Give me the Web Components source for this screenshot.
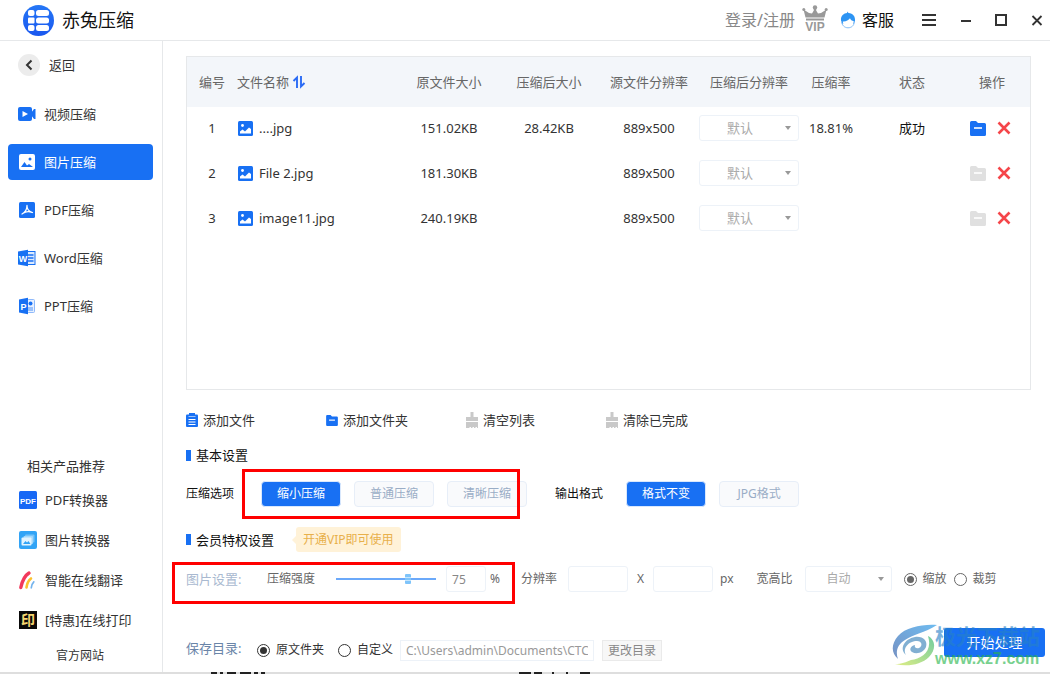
<!DOCTYPE html>
<html lang="zh-CN">
<head>
<meta charset="utf-8">
<meta name="viewport" content="width=device-width, initial-scale=1">
<title>赤兔压缩</title>
<style>
body { margin: 0; background: #fff; color: #333; font: 13px/20px "Noto Sans", "Noto Sans CJK SC", sans-serif; --blue: #1870f3; --line: #e6e8ea; }
</style>
</head>
<body>
<ct-app></ct-app>
<script>
const RESET = `*{box-sizing:border-box}button,input,select{font:inherit;color:inherit;margin:0}a{color:inherit;text-decoration:none}button{border:0;background:none;padding:0;cursor:pointer}`;

function define(name, css, html, setup) {
  const template = document.createElement('template');
  template.innerHTML = `<style>${RESET}${css}</style>${html}`;
  customElements.define(name, class extends HTMLElement {
    constructor() {
      super();
      this.attachShadow({ mode: 'open' }).append(template.content.cloneNode(true));
    }
    connectedCallback() {
      if (setup && !this.ready) { this.ready = true; setup(this, this.shadowRoot); }
    }
  });
}

const ICONS = {
  logo: ['0 0 31 31', `<defs><linearGradient id="g" x2="0" y2="1"><stop stop-color="#2577f6"/><stop offset="1" stop-color="#1a57ef"/></linearGradient></defs><circle cx="15.500" cy="15.500" r="15.500" fill="url(#g)"/><g fill="#fff"><rect x="5" y="5" width="6.500" height="6" rx="2"/><rect x="13" y="5" width="13" height="6" rx="2.500"/><rect x="5" y="12.500" width="6.500" height="6" rx="1"/><rect x="13" y="12.500" width="13" height="6" rx="2.500"/><rect x="5" y="20" width="6.500" height="6" rx="2"/><rect x="13" y="20" width="13" height="6" rx="2.500"/></g>`],
  crown: ['0 0 26 26', `<path d="M3.500 12.500 1.500 4.500 7 8l3 .5 1.800-3L12 2h2l.2 3.500 1.800 3 3-.5 5.500-3.500-2 8zM4 13.500h18v2H4z" fill="#999"/><circle cx="1.800" cy="4.500" r="1.500" fill="#999"/><circle cx="24.200" cy="4.500" r="1.500" fill="#999"/><circle cx="13" cy="2.500" r="2.200" fill="#999"/><text x="13" y="25.500" text-anchor="middle" font-family="Liberation Sans" font-weight="700" font-size="12" fill="#999">VIP</text>`],
  service: ['0 0 16 18', `<path d="M1 9.500C.500 4.500 4 2.200 7 2L7.500.500l1 1.500C13 2.300 15.500 5.500 15 10l-1.500 3h-11z" fill="#2d94f3"/><path d="M2.800 10.500c3 .3 5.700-1 7.200-3.200.5 1.500 1.800 2.700 3.800 3-.3 3.700-2.600 6-5.800 6s-5-2-5.200-5.800z" fill="#fff"/><path d="M1.500 10.500C2 14.500 4.700 16.800 8 16.800s6-2 6.400-6" fill="none" stroke="#83bdf6"/>`],
  menu: ['0 0 16 14', `<path d="M1 2h14M1 7h14M1 12h14" stroke="#333" stroke-width="2"/>`],
  min: ['0 0 10 12', `<path d="M0 7h10" stroke="#333" stroke-width="2"/>`],
  max: ['0 0 12 12', `<path d="M1 1h10v10H1z" fill="none" stroke="#333" stroke-width="2"/>`],
  close: ['0 0 12 12', `<path d="m1.500 2 9 9M10.500 2l-9 9" stroke="#333" stroke-width="1.800"/>`],
  back: ['0 0 22 22', `<circle cx="11" cy="11" r="11" fill="#ececec"/><path d="m13.500 6.500-4.500 4.500 4.500 4.500" fill="none" stroke="#333" stroke-width="2"/>`],
  video: ['0 0 18 18', `<rect y="2" width="14" height="14" rx="2" fill="#1870f3"/><path d="m13 8 3-4h1.500v10H16l-3-4z" fill="#1870f3"/><path d="m4.500 6 5.500 3-5.500 3z" fill="#fff"/>`],
  image: ['0 0 15 15', `<rect width="15" height="15" rx="1.500" fill="#1870f3"/><circle cx="4.500" cy="4.500" r="1.400" fill="#fff"/><path d="M2 12.500V10.500l2.500-2 2.500 2L11 6.500l2 1.500v4.500z" fill="#fff"/>`],
  imagew: ['0 0 18 18', `<rect x="1" y="1" width="16" height="16" rx="2" fill="#fff"/><circle cx="12" cy="6" r="1.500" fill="#1870f3"/><path d="m3 14 3.500-5L9 12.500l2-1.500 4 3z" fill="#1870f3"/>`],
  pdf: ['0 0 18 18', `<rect x="1" y="1" width="16" height="16" rx="1.500" fill="#1870f3"/><path d="M9 4.500c0 3-1 6.500-5 8.500M9 5c0 3 2 5.500 5.500 6.500M5 12.300c2-1.500 5-2.300 9-1" fill="none" stroke="#fff" stroke-width="1.300" stroke-linecap="round"/>`],
  word: ['0 0 18 18', `<rect x="9.500" y="2.500" width="7.500" height="13" fill="#dceafe" stroke="#1870f3"/><path d="M10 6h5.500M10 9h5.500M10 12h5.500" stroke="#1870f3" stroke-width="1.300"/><path d="M0 2.500 10 .8v16.500L0 15.500z" fill="#1870f3"/><text x="5" y="12.500" text-anchor="middle" font-family="Liberation Sans" font-weight="700" font-size="9" fill="#fff">W</text>`],
  ppt: ['0 0 18 18', `<rect x="9.500" y="2.500" width="7" height="13" rx="1" fill="#e6f0ff" stroke="#8fb9fa"/><circle cx="12.500" cy="6.500" r="2" fill="#1870f3"/><path d="M10 11h5M10 13h5" stroke="#4e91f6"/><path d="M1 2.500 10 .8v16.500L1 15.500z" fill="#1870f3"/><text x="5.500" y="12.500" text-anchor="middle" font-family="Liberation Sans" font-weight="700" font-size="9" fill="#fff">P</text>`],
  pdfapp: ['0 0 18 18', `<rect width="18" height="18" rx="1.500" fill="#1768f5"/><text x="9" y="12.500" text-anchor="middle" font-family="Liberation Sans" font-weight="700" font-size="8" fill="#fff">PDF</text>`],
  imgapp: ['0 0 18 18', `<rect width="18" height="18" rx="2" fill="#32a4f6"/><rect x="6" y="3.500" width="9.500" height="8" rx="1" fill="#77c4f9"/><rect x="4.500" y="5" width="9.500" height="8" rx="1" fill="#a4d8fb"/><rect x="2.500" y="6.500" width="10" height="8" rx="1" fill="#e3f4fe"/><path d="m4 13 2.500-3L8 11.500l1.500-1.500 2 3z" fill="#32a4f6"/>`],
  translate: ['0 0 18 18', `<g fill="none" stroke-linecap="round"><path d="M1.800 16.500C3 11 5 5 10 2" stroke="#f2395b" stroke-width="3.400"/><path d="M7.500 16.500c.5-4 2-7 4.500-9" stroke="#fcc12e" stroke-width="2.600"/><path d="M12.300 16.800c.2-2.500 1-4.500 2.500-6" stroke="#74b4ed" stroke-width="1.700"/></g>`],
  print: ['0 0 18 18', `<rect width="18" height="18" fill="#0a0a0a"/><text x="9" y="14" text-anchor="middle" font-family="Noto Sans CJK SC" font-weight="700" font-size="14" fill="#f6d66f">印</text>`],
  sort: ['0 0 12 12', `<path d="M.500 5 4 1.500V12M8 0v10.500L11.500 7" fill="none" stroke="#2a6bf5" stroke-width="1.900"/>`],
  folder: ['0 0 16 15', `<path d="M0 1.500Q0 0 1.500 0H6l2 2h6.500Q16 2 16 3.500v10Q16 15 14.500 15h-13Q0 15 0 13.500z" fill="currentColor"/><path d="M4 7h8" stroke="#fff" stroke-width="1.600"/>`],
  remove: ['0 0 14 14', `<path d="m1.500 1.500 11 11M12.500 1.500l-11 11" stroke="#f5464a" stroke-width="2.600"/>`],
  clip: ['0 0 12 14', `<rect y="1.500" width="12" height="12.500" rx="1" fill="#1870f3"/><path d="M3 0h6v3H3z" fill="#1870f3"/><path d="M2.500 3.500h7" stroke="#9cc3fb"/><path d="M2.500 6.500h7M2.500 9h7M2.500 11.500h7" stroke="#fff"/>`],
  broom: ['0 0 12 16', `<path d="M4.500 0h3v5H12v4H0V5h4.500zM0 10h12v6h-1v-1H9.500v1H8v-1H6.500v1H5v-1H3.500v1H0z" fill="#c9c9c9"/>`],
  arrow: ['0 0 6 4', `<path d="M0 0h6L3 4z" fill="#999"/>`]
};

define('ct-icon', `:host{display:inline-flex;flex:none}svg{display:block;overflow:visible}`, ``, (el, root) => {
  const [box, body] = ICONS[el.getAttribute('name')];
  const [, , w, h] = box.split(' ');
  const width = el.getAttribute('width') || w, height = el.getAttribute('height') || h;
  root.innerHTML += `<svg viewBox="${box}" width="${width}" height="${height}" aria-hidden="true">${body}</svg>`;
});

define('ct-header', `
:host{display:flex;align-items:center;height:41px;padding:0 7px 0 23px;border-bottom:1px solid var(--line)}
h1{margin:0 auto 0 8px;font-size:18px;font-weight:400;line-height:24px;color:#111}
.user{font-size:16px;color:#888;margin-right:7px}
ct-icon[name=crown]{align-self:flex-start;margin-top:5px}
.help{display:flex;align-items:center;gap:6px;font-size:16px;color:#111;margin:0 27px 0 12px}
.win{display:flex;align-items:center;gap:24px}.win button{display:flex;align-items:center}
`, `<ct-icon name="logo"></ct-icon><h1>赤兔压缩</h1>
<a class="user" href="#login">登录/注册</a><ct-icon name="crown"></ct-icon>
<a class="help" href="#help"><ct-icon name="service"></ct-icon>客服</a>
<div class="win"><button aria-label="菜单"><ct-icon name="menu"></ct-icon></button><button aria-label="最小化"><ct-icon name="min"></ct-icon></button><button aria-label="最大化"><ct-icon name="max"></ct-icon></button><button aria-label="关闭"><ct-icon name="close"></ct-icon></button></div>`);

define('ct-nav-item', `
:host{display:block}a{display:flex;align-items:center;gap:8px;height:36px;padding:0 10px;border-radius:4px}
:host([active]) a{background:var(--blue);color:#fff}
`, `<a href="#nav"><slot name="icon"></slot><slot></slot></a>`);

define('ct-product', `:host{display:block}a{display:flex;align-items:center;gap:8px;height:40px;padding-left:19px}`,
  `<a href="#product"><slot name="icon"></slot><slot></slot></a>`);

define('ct-sidebar', `
:host{display:flex;flex-direction:column;flex:none;width:163px;border-right:1px solid var(--line);padding-top:6px}
.back{display:flex;align-items:center;gap:9px;height:36px;padding-left:18px;margin-bottom:13px}
nav{display:flex;flex-direction:column;gap:12px;padding:0 9px 0 8px}
.more{margin-top:auto}h2{margin:0 0 4px 27px;font-size:13px;font-weight:400;line-height:20px}
.site{display:block;font-size:12px;line-height:32px;padding-left:56px}
`, `<button class="back"><ct-icon name="back"></ct-icon>返回</button>
<nav>
<ct-nav-item><ct-icon slot="icon" name="video"></ct-icon>视频压缩</ct-nav-item>
<ct-nav-item active><ct-icon slot="icon" name="imagew"></ct-icon>图片压缩</ct-nav-item>
<ct-nav-item><ct-icon slot="icon" name="pdf"></ct-icon>PDF压缩</ct-nav-item>
<ct-nav-item><ct-icon slot="icon" name="word"></ct-icon>Word压缩</ct-nav-item>
<ct-nav-item><ct-icon slot="icon" name="ppt"></ct-icon>PPT压缩</ct-nav-item>
</nav>
<div class="more"><h2>相关产品推荐</h2>
<ct-product><ct-icon slot="icon" name="pdfapp"></ct-icon>PDF转换器</ct-product>
<ct-product><ct-icon slot="icon" name="imgapp"></ct-icon>图片转换器</ct-product>
<ct-product><ct-icon slot="icon" name="translate"></ct-icon>智能在线翻译</ct-product>
<ct-product><ct-icon slot="icon" name="print"></ct-icon>[特惠]在线打印</ct-product>
<a class="site" href="#site">官方网站</a></div>`);

define('ct-select', `
:host{display:inline-block;position:relative;width:100px;height:26px;color:#aaa}
select{display:block;width:100%;height:100%;appearance:none;border:1px solid #edf2f8;border-radius:3px;background:#fff;padding:0 0 0 var(--inset,27px);outline:0}
ct-icon{position:absolute;right:8px;top:11px;pointer-events:none}
`, `<select></select><ct-icon name="arrow"></ct-icon>`, (el, root) => {
  const select = root.querySelector('select');
  select.add(new Option(el.getAttribute('value')));
  select.setAttribute('aria-label', el.getAttribute('label'));
});

const FILES = [
  ['....jpg', '151.02KB', '28.42KB', '889x500', '18.81%', '成功'],
  ['File 2.jpg', '181.30KB', '', '889x500', '', ''],
  ['image11.jpg', '240.19KB', '', '889x500', '', '']
];
define('ct-file-table', `
:host{display:block;border:1px solid var(--line)}
table{width:100%;table-layout:fixed;border-collapse:collapse;text-align:center}
th{height:50px;padding:0;background:#f3f6fa;color:#666;font-weight:400;white-space:nowrap}
td{height:45px;padding:0 0 3px}
.name{text-align:left}.name span{display:flex;align-items:center;gap:6px}td.name{padding-left:1px}
.name.h span{gap:4px}
td.state{color:#111}
th.ops{padding-right:7px}td.ops{padding-right:11px}.ops span{display:flex;justify-content:center;align-items:center;gap:11px}
.ops button{display:flex;color:var(--blue)}.ops button:disabled{color:#e0e0e0}
ct-select{display:block}
`, `<table><colgroup><col style="width:50px"><col><col style="width:100px"><col style="width:100px"><col style="width:100px"><col style="width:100px"><col style="width:64px"><col style="width:98px"><col style="width:69px"></colgroup>
<thead><tr><th>编号</th><th class="name h"><span>文件名称<ct-icon name="sort"></ct-icon></span></th><th>原文件大小</th><th>压缩后大小</th><th>源文件分辨率</th><th>压缩后分辨率</th><th>压缩率</th><th>状态</th><th class="ops">操作</th></tr></thead><tbody></tbody></table>`, (el, root) => {
  root.querySelector('tbody').innerHTML = FILES.map(([name, size, out, res, rate, state], i) => `<tr><td>${i + 1}</td><td class="name"><span><ct-icon name="image"></ct-icon>${name}</span></td><td>${size}</td><td>${out}</td><td>${res}</td><td><ct-select value="默认" label="压缩后分辨率"></ct-select></td><td>${rate}</td><td class="state">${state}</td><td class="ops"><span><button aria-label="打开文件夹" ${state ? '' : 'disabled'}><ct-icon name="folder"></ct-icon></button><button aria-label="删除"><ct-icon name="remove"></ct-icon></button></span></td></tr>`).join('');
});

define('ct-tool', `:host{display:block;width:140px}button{display:flex;align-items:center;gap:5px;height:20px}`,
  `<button><slot name="icon"></slot><slot></slot></button>`);

define('ct-heading', `:host{display:flex;align-items:center;gap:5px;color:#111}i{width:5px;height:11px;background:var(--blue)}h2{margin:0;font-size:13px;font-weight:400;line-height:20px}`,
  `<i></i><h2><slot></slot></h2>`);

define('ct-choice', `
:host{display:block;flex:none}
button{width:80px;height:26px;border:1px solid #e7eef8;border-radius:4px;background:#f9fafc;color:#9aadc6;font-size:12px}
:host([active]) button{background:var(--blue);color:#fff;border-color:#d9e8fd}
`, `<button><slot></slot></button>`);

/* Red call-out frame drawn over the controls it surrounds. */
define('ct-callout', `:host{position:absolute;border:3px solid #f00;pointer-events:none}`, ``);

define('ct-options', `
:host{display:flex;align-items:center;font-size:12px;color:#111}
.group{position:relative;display:flex;gap:13px;margin:0 28px 0 27px}
.format{display:flex;gap:13px;margin-left:23px}
ct-callout{inset:-12px 7px -12px -19px}
`, `<span>压缩选项</span><div class="group"><ct-choice active>缩小压缩</ct-choice><ct-choice>普通压缩</ct-choice><ct-choice>清晰压缩</ct-choice><ct-callout></ct-callout></div>
<span>输出格式</span><div class="format"><ct-choice active>格式不变</ct-choice><ct-choice>JPG格式</ct-choice></div>`);

define('ct-vip-tag', `
:host{display:block}
a{position:relative;display:block;height:25px;padding:0 7px;border-radius:3px;background:#fff2d8;color:#e8b04b;font-size:12px;line-height:25px}
a::before{content:"";position:absolute;left:-4px;top:9px;border:solid transparent;border-width:4px 4px 4px 0;border-right-color:#fff2d8}
`, `<a href="#vip"><slot></slot></a>`);

const RADIO = `input[type=radio]{appearance:none;width:13px;height:13px;border:1px solid currentColor;border-radius:50%;display:grid;place-items:center;flex:none}
input[type=radio]:checked::before{content:"";width:7px;height:7px;border-radius:50%;background:currentColor}
label.r{display:flex;align-items:center;gap:6px}`;

define('ct-image-settings', RADIO + `
:host{display:flex;align-items:center;font-size:12px;color:#666;white-space:nowrap}
h3{margin:0;width:81px;font-size:13px;font-weight:400;color:#a9b9d0}
.strength{position:relative;display:flex;align-items:center}
ct-callout{inset:-4px -15px -12px -14px}
input:not([type]){height:26px;border:1px solid #edf2f8;border-radius:3px;padding:0 5px;outline:0;background:#fff;color:#888}
.quality{width:40px;margin:0 4px 0 10px}
.size{width:60px}
input[type=range]{appearance:none;width:100px;height:16px;margin-left:21px;background:none}
input[type=range]::-webkit-slider-runnable-track{height:2px;background:#6ba9fa}
input[type=range]::-webkit-slider-thumb{appearance:none;width:6px;height:10px;margin-top:-4px;border-radius:1px;background:linear-gradient(#7fc4fa 0 3px,#c5e5fd 3px 4px,#7fc4fa 4px 6px,#c5e5fd 6px 7px,#7fc4fa 7px)}
.res{margin:0 11px 0 21px}.x{margin:0 9px}.px{margin:0 23px 0 7px}
ct-select{width:87px;margin:0 12px;--inset:21px}
.radios{display:flex;gap:7px}
`, `<div class="strength"><h3>图片设置:</h3><label for="s">压缩强度</label><input id="s" type="range" value="73"><input class="quality" value="75" aria-label="压缩强度百分比"><span>%</span><ct-callout></ct-callout></div>
<label class="res" for="w">分辨率</label><input class="size" id="w"><span class="x">X</span><input class="size" aria-label="高度"><span class="px">px</span>
<span>宽高比</span><ct-select value="自动" label="宽高比"></ct-select>
<div class="radios"><label class="r"><input type="radio" name="fit" checked>缩放</label><label class="r"><input type="radio" name="fit">裁剪</label></div>`);

define('ct-watermark', `
:host{display:flex;opacity:.62;pointer-events:none;white-space:nowrap}
div{margin-left:-3px;font-family:"Liberation Sans","Noto Sans CJK SC",sans-serif;line-height:20px}
b{display:block;font-size:21px;color:#2681c8;line-height:26px}span{display:block;font-size:16px;font-weight:700;color:#27b54b;line-height:18px}
`, `<svg width="46" height="42" viewBox="0 0 46 42" aria-hidden="true"><defs><linearGradient id="b" x1="1" x2="0" y2="1"><stop stop-color="#1793e8"/><stop offset="1" stop-color="#234f9f"/></linearGradient><linearGradient id="n" x1="1" x2="0" y2="1"><stop stop-color="#1cae65"/><stop offset="1" stop-color="#cbe33b"/></linearGradient></defs>
<path d="M45 1C31 0 14 3 6 12-1 20-1 29 6 35 3 27 6 20 13 16 22 10 32 9 45 1z" fill="url(#b)"/>
<path d="M14 31C7 25 12 15 23 13c8-1 13 4 11 10-2 5-9 8-14 5-3-2-2-6 3-7-1 2 1 4 4 3 4-2 3-7-2-7-8 0-15 7-11 14z" fill="#357fb8"/>
<path d="M36 12c8 4 8 14 1 21-8 8-22 10-34 7 7 0 11-2 16-4 10-1 22-8 17-24z" fill="url(#n)"/></svg><div><b>极光下载站</b><span>www.xz7.com</span></div>`);

define('ct-save-bar', RADIO + `
:host{position:relative;display:flex;align-items:center;height:44px;font-size:12px;color:#333;white-space:nowrap}
h3{margin:0 0 4px;width:71px;font-size:13px;font-weight:400;color:#6a85a8}
.r+.r{margin:0 7px 0 14px}
.path{width:194px;height:21px;border:1px solid #edf2f8;padding:0 5px;color:#999;font-size:12px;outline:0}
.change{width:60px;height:21px;margin-left:8px;border:1px solid #eaeaea;background:#f7f7f7;color:#888}
.start{align-self:flex-start;width:101px;height:29px;margin-left:auto;border-radius:3px;background:var(--blue);color:#fff;font-size:14px}
ct-watermark{position:absolute;right:5px;top:-4px}
`, `<h3>保存目录:</h3><label class="r"><input type="radio" name="dir" checked>原文件夹</label><label class="r"><input type="radio" name="dir">自定义</label>
<input class="path" aria-label="保存路径" value="C:\\Users\\admin\\Documents\\CTC"><button class="change">更改目录</button><button class="start">开始处理</button><ct-watermark></ct-watermark>`);

define('ct-app', `
:host{display:flex;flex-direction:column;min-height:100vh}
.body{display:flex;flex:1}
main{display:flex;flex-direction:column;flex:1;min-width:0;padding:15px 5px 0 23px}
ct-file-table{flex:1;min-height:190px;margin-right:14px}
.tools{display:flex;margin:20px 0 15px}
ct-options{margin:16px 0 20px}
.vip{display:flex;align-items:center;gap:22px;margin-bottom:14px}
ct-image-settings{margin-bottom:36px}
.edge{display:block;width:100%;height:2px;background:#dedede}
`, `<ct-header></ct-header><div class="body"><ct-sidebar></ct-sidebar><main>
<ct-file-table></ct-file-table>
<div class="tools"><ct-tool><ct-icon slot="icon" name="clip"></ct-icon>添加文件</ct-tool><ct-tool><ct-icon slot="icon" name="folder" width="12" height="11" style="color:var(--blue)"></ct-icon>添加文件夹</ct-tool><ct-tool><ct-icon slot="icon" name="broom"></ct-icon>清空列表</ct-tool><ct-tool><ct-icon slot="icon" name="broom"></ct-icon>清除已完成</ct-tool></div>
<ct-heading>基本设置</ct-heading><ct-options></ct-options>
<div class="vip"><ct-heading>会员特权设置</ct-heading><ct-vip-tag>开通VIP即可使用</ct-vip-tag></div>
<ct-image-settings></ct-image-settings><ct-save-bar></ct-save-bar>
</main></div>
<svg class="edge" aria-hidden="true"><path d="M211 1h6m3 0h3m4 0h9m4 0h11m3 0h4m3 0h4M519 1h12m3 0h8m10 0h2m12 0h2m12 0h10" stroke="#222" stroke-width="2"/></svg>`);
</script>
</body>
</html>
